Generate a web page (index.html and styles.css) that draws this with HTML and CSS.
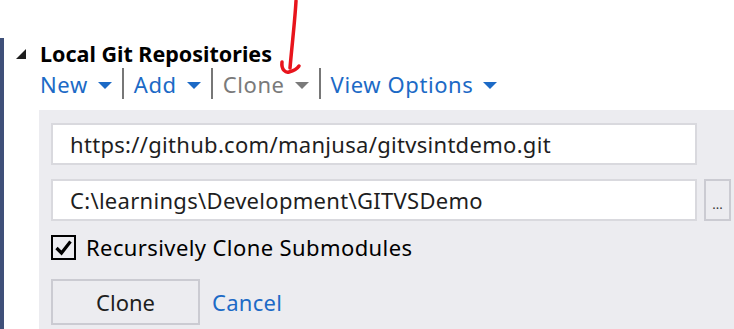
FILE: index.html
```html
<!DOCTYPE html>
<html lang="en">
<head>
    <meta charset="UTF-8">
    <meta name="viewport" content="width=device-width, initial-scale=1.0">
    <title>Local Git Repositories</title>
    <link rel="stylesheet" href="styles.css">
</head>
<body>
    <div id="page">
        <div id="edge"></div>
        <div id="content">
            <!-- Section header -->
            <div class="section-title">
                <span class="expander"></span>
                <span>Local Git Repositories</span>
            </div>

            <!-- Toolbar links -->
            <div class="toolbar">
                <a class="tool">New <span class="caret"></span></a>
                <span class="sep"></span>
                <a class="tool">Add <span class="caret"></span></a>
                <span class="sep"></span>
                <a class="tool disabled">Clone <span class="caret"></span></a>
                <span class="sep"></span>
                <a class="tool">View Options <span class="caret"></span></a>
            </div>

            <!-- Clone panel -->
            <div class="panel">
                <div class="field-row">
                    <input type="text" class="field" value="https://github.com/manjusa/gitvsintdemo.git">
                </div>
                <div class="field-row">
                    <input type="text" class="field" value="C:\learnings\Development\GITVSDemo">
                    <button class="browse">...</button>
                </div>
                <label class="check-row">
                    <span class="checkbox">
                        <svg width="19" height="19" viewBox="0 0 19 19"><path d="M2.5 10 L7.5 15 L16.5 3.5" fill="none" stroke="#000" stroke-width="3.2"/></svg>
                    </span>
                    Recursively Clone Submodules
                </label>
                <div class="actions">
                    <button class="btn">Clone</button>
                    <a class="link">Cancel</a>
                </div>
            </div>
        </div>

        <!-- hand drawn annotation -->
        <svg class="annotation" width="34" height="80" viewBox="0 0 34 80">
            <path d="M20 1 C19 20 16 45 14 68" fill="none" stroke="#e8141c" stroke-width="3.5" stroke-linecap="round"/>
            <path d="M6 62 C5 70 10 73 13 72 C17 71 21 69 23 66" fill="none" stroke="#e8141c" stroke-width="3.5" stroke-linecap="round"/>
        </svg>
    </div>
</body>
</html>
```

FILE: styles.css
```css
body {
    margin: 0;
    padding: 0;
    background-color: #fff;
    font-family: 'Noto Sans', 'Open Sans', sans-serif;
    color: #1e1e1e;
}

#page {
    position: relative;
    display: flex;
    height: 329px;
    overflow: hidden;
}

#edge {
    width: 4px;
    margin-top: 38px;
    background-color: #3f5079;
    flex-shrink: 0;
}

#content {
    flex: 1;
    display: flex;
    flex-direction: column;
}

.section-title {
    display: flex;
    align-items: center;
    gap: 14px;
    margin-top: 39px;
    padding-left: 12px;
    font-size: 21.5px;
    font-weight: bold;
    color: #000;
    height: 28px;
}

.expander {
    width: 0;
    height: 0;
    border-left: 10px solid transparent;
    border-bottom: 10px solid #1e1e1e;
    margin-top: 2px;
}

.toolbar {
    display: flex;
    align-items: center;
    margin-left: 36px;
    height: 31px;
    font-size: 22px;
    letter-spacing: 0.6px;
    margin-top: 1px;
}

.tool {
    color: #1c6ac6;
    display: flex;
    align-items: center;
    gap: 10px;
    cursor: pointer;
}

.tool.disabled {
    color: #7a7a7a;
}

.caret {
    width: 0;
    height: 0;
    border-left: 7px solid transparent;
    border-right: 7px solid transparent;
    border-top: 7px solid #1c6ac6;
    margin-top: 3px;
}

.tool.disabled .caret {
    border-top-color: #7a7a7a;
}

.sep {
    width: 2px;
    height: 31px;
    background-color: #777;
    margin: 0 10px;
}

.panel {
    margin-left: 35px;
    margin-top: 11px;
    flex: 1;
    background-color: #ececf0;
    padding: 13px 4px 0 12px;
    display: flex;
    flex-direction: column;
}

.field-row {
    display: flex;
    gap: 7px;
    margin-bottom: 14px;
}

.field {
    width: 646px;
    height: 42px;
    box-sizing: border-box;
    border: 2px solid #d9d9de;
    background-color: #fff;
    font-family: inherit;
    font-size: 22px;
    letter-spacing: 0.3px;
    color: #1e1e1e;
    padding: 0 0 0 17px;
    outline: none;
}

.browse {
    width: 27px;
    height: 42px;
    border: 2px solid #cbcbd2;
    background-color: #ececf0;
    font-family: inherit;
    font-size: 13px;
    padding: 8px 0 0;
    color: #333;
}

.check-row {
    display: flex;
    align-items: center;
    gap: 10px;
    font-size: 22px;
    letter-spacing: 0.4px;
    color: #000;
    margin-top: -2px;
    height: 28px;
}

.checkbox {
    width: 21px;
    height: 21px;
    border: 2px solid #000;
    display: flex;
    align-items: center;
    justify-content: center;
}

.actions {
    display: flex;
    align-items: center;
    gap: 12px;
    margin-top: 18px;
}

.btn {
    width: 149px;
    height: 46px;
    border: 2px solid #cbcbd2;
    background-color: #ececf0;
    font-family: inherit;
    font-size: 22px;
    color: #1e1e1e;
}

.link {
    color: #1c6ac6;
    font-size: 22px;
    letter-spacing: 0.3px;
    cursor: pointer;
}

.annotation {
    position: absolute;
    left: 276px;
    top: 0;
}
```
